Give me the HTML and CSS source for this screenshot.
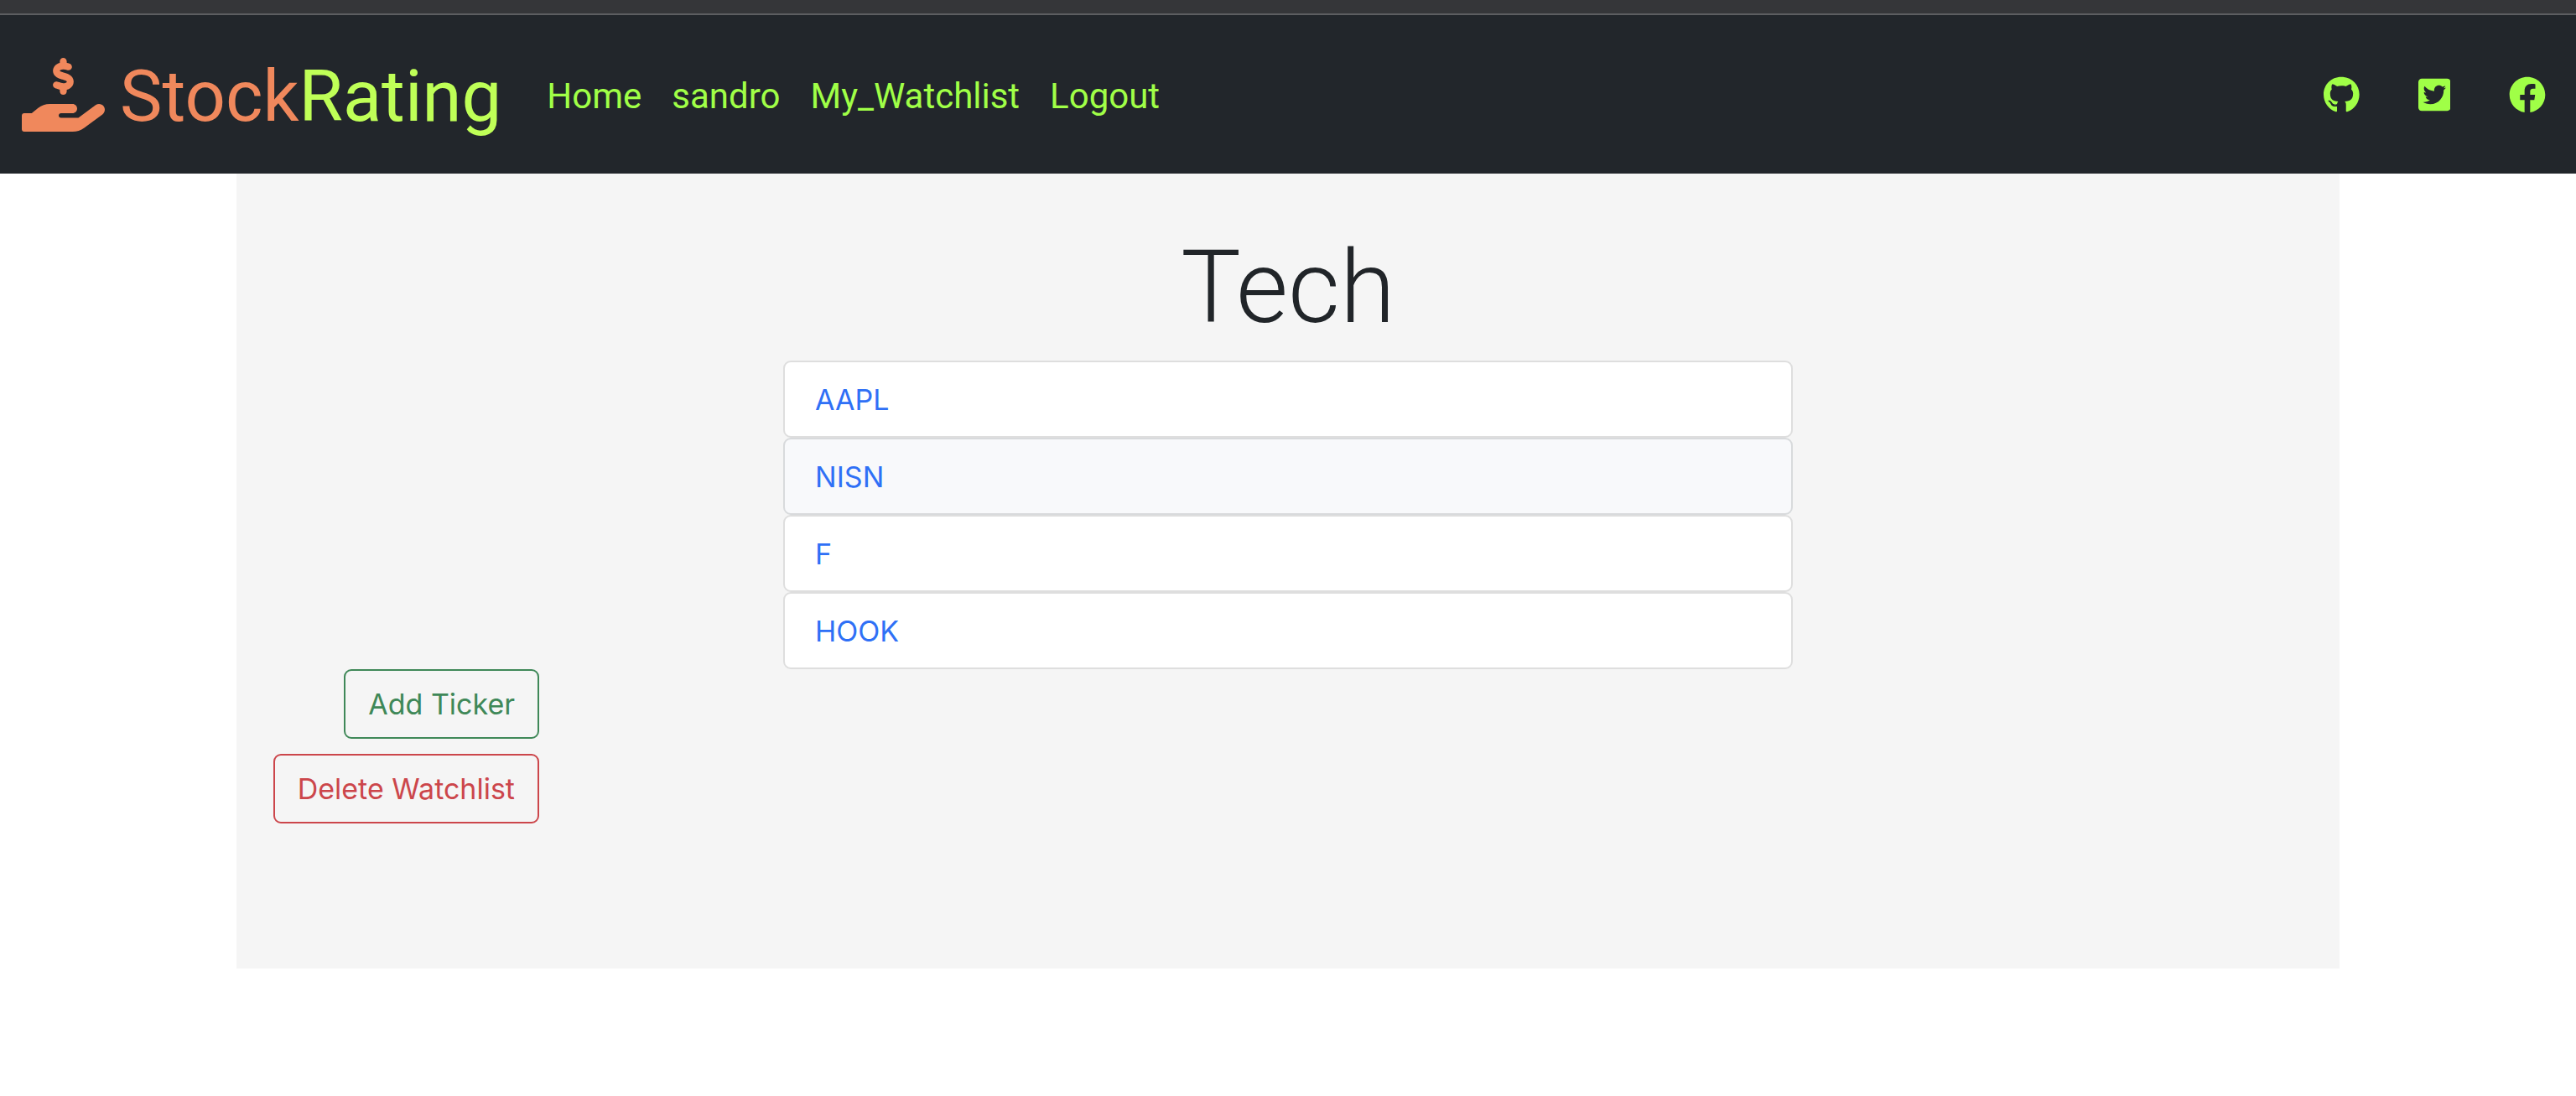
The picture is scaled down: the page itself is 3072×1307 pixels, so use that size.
FILE: index.html
```html
<!DOCTYPE html>
<html lang="en">
<head>
<meta charset="utf-8">
<meta name="viewport" content="width=device-width, initial-scale=1">
<title>StockRating</title>
<link rel="stylesheet" href="styles.css">
</head>
<body>
<header class="navbar">
  <a class="brand" href="#">
    <svg class="brand-icon" viewBox="0 0 576 512" aria-hidden="true"><path d="M312 24V34.5c6.4 1.2 12.6 2.700 18.2 4.200c12.800 3.400 20.400 16.600 17 29.400s-16.600 20.400-29.400 17c-10.900-2.900-21.100-4.900-30.200-5c-7.300-.1-14.700 1.700-19.400 4.400c-2.100 1.300-3.100 2.400-3.500 3c-.3 .5-.7 1.200-.7 2.800c0 .3 0 .5 0 .6c.2 .2 .9 1.200 3.300 2.600c5.800 3.500 14.400 6.200 27.400 10.100l.9 .3c11.100 3.300 25.900 7.800 37.900 15.300c13.700 8.600 26.100 22.900 26.400 44.900c.3 22.500-11.400 38.900-26.700 48.500c-6.700 4.100-13.900 7-21.300 8.800V232c0 13.300-10.700 24-24 24s-24-10.700-24-24V220.600c-9.500-2.300-18.200-5.300-25.600-7.800c-2.100-.7-4.100-1.400-6-2c-12.600-4.200-19.400-17.800-15.200-30.400s17.800-19.400 30.400-15.200c2.600 .9 5 1.700 7.300 2.500c13.600 4.600 23.400 7.900 33.900 8.300c8 .3 15.100-1.600 19.200-4.100c1.900-1.200 2.800-2.200 3.200-2.900c.4-.6 .9-1.800 .8-4.100l0-.2c0-1 0-2.100-4-4.600c-5.700-3.600-14.300-6.400-27.100-10.300l-1.900-.6c-10.800-3.200-25-7.500-36.400-14.400c-13.500-8.100-26.500-22-26.600-44.100c-.1-22.900 12.900-38.600 27.700-47.400c6.400-3.800 13.300-6.400 20.200-8.200V24c0-13.300 10.700-24 24-24s24 10.700 24 24zM568.200 336.300c13.100 17.800 9.300 42.800-8.500 55.900L433.100 485.500c-23.400 17.200-51.600 26.500-80.700 26.500H16c-8.800 0-16-7.200-16-16V400c0-8.800 7.200-16 16-16H68.800l44.900-36c22.700-18.200 50.900-28 80-28H352c17.700 0 32 14.300 32 32s-14.300 32-32 32H272c-8.800 0-16 7.200-16 16s7.200 16 16 16H392.600l119.700-88.200c17.800-13.100 42.800-9.300 55.900 8.500z"/></svg>
    <span class="brand-name">Stock<span class="brand-accent">Rating</span></span>
  </a>
  <nav class="links">
    <a href="#">Home</a>
    <a href="#">sandro</a>
    <a href="#">My_Watchlist</a>
    <a href="#">Logout</a>
  </nav>
  <div class="social">
    <a href="#" aria-label="GitHub"><svg viewBox="0 0 496 512"><path d="M165.900 397.400c0 2-2.300 3.600-5.200 3.600-3.300.3-5.600-1.300-5.600-3.600 0-2 2.300-3.600 5.200-3.600 3-.3 5.600 1.300 5.600 3.600zM244.800 8C106.100 8 0 113.300 0 252c0 110.900 69.800 205.800 169.500 239.200 12.800 2.300 17.300-5.600 17.300-12.100 0-6.200-.3-40.400-.3-61.400 0 0-70 15-84.700-29.800 0 0-11.400-29.100-27.800-36.600 0 0-22.900-15.700 1.600-15.400 0 0 24.900 2 38.600 25.800 21.900 38.600 58.600 27.500 72.900 20.900 2.300-16 8.800-27.100 16-33.700-55.900-6.200-112.300-14.300-112.300-110.500 0-27.500 7.600-41.300 23.600-58.900-2.600-6.500-11.100-33.300 2.600-67.900 20.900-6.500 69 27 69 27 20-5.600 41.500-8.500 62.800-8.500s42.800 2.900 62.800 8.500c0 0 48.100-33.600 69-27 13.700 34.700 5.200 61.400 2.600 67.900 16 17.700 25.800 31.500 25.800 58.900 0 96.500-58.900 104.200-114.800 110.500 9.200 7.900 17 22.900 17 46.400 0 33.700-.3 75.400-.3 83.600 0 6.500 4.600 14.400 17.300 12.100C428.200 457.800 496 362.900 496 252 496 113.300 383.500 8 244.800 8z"/></svg></a>
    <a href="#" aria-label="Twitter"><svg viewBox="0 0 448 512"><path d="M400 32H48C21.500 32 0 53.500 0 80v352c0 26.500 21.500 48 48 48h352c26.500 0 48-21.500 48-48V80c0-26.500-21.500-48-48-48zm-48.900 158.800c.2 2.800.2 5.700.2 8.500 0 86.700-66 186.600-186.600 186.600-37.200 0-71.700-10.800-100.700-29.400 5.300.6 10.400.8 15.800.8 30.700 0 58.900-10.400 81.400-28-28.800-.6-53-19.500-61.300-45.500 10.100 1.500 19.200 1.500 29.600-1.200-30-6.100-52.500-32.500-52.500-64.400v-.8c8.700 4.900 18.900 7.900 29.600 8.300a65.447 65.447 0 0 1-29.200-54.600c0-12.200 3.200-23.400 8.900-33.100 32.300 39.800 80.800 65.800 135.200 68.600-9.300-44.500 24-80.600 64-80.600 18.900 0 35.900 7.900 47.900 20.700 14.800-2.800 29-8.300 41.600-15.800-4.900 15.200-15.200 28-28.800 36.100 13.200-1.400 26-5.100 37.800-10.200-8.900 13.100-20.100 24.700-32.900 34z"/></svg></a>
    <a href="#" aria-label="Facebook"><svg viewBox="0 0 512 512"><path d="M504 256C504 119 393 8 256 8S8 119 8 256c0 123.780 90.690 226.380 209.250 245V327.690h-63V256h63v-54.640c0-62.150 37-96.480 93.670-96.480 27.140 0 55.520 4.840 55.520 4.840v61h-31.280c-30.800 0-40.410 19.120-40.410 38.730V256h68.780l-11 71.690h-57.780V501C413.310 482.380 504 379.780 504 256z"/></svg></a>
  </div>
</header>
<main class="page">
  <h1 class="title">Tech</h1>
  <div class="list">
    <a class="item" href="#">AAPL</a>
    <a class="item active" href="#">NISN</a>
    <a class="item" href="#">F</a>
    <a class="item" href="#">HOOK</a>
  </div>
  <div class="actions">
    <button class="btn add" type="button">Add Ticker</button>
    <button class="btn delete" type="button">Delete Watchlist</button>
  </div>
</main>
</body>
</html>
```
FILE: styles.css
```css
* { box-sizing: border-box; }

body {
  margin: 0;
  background: #fff;
  color: #212529;
  font: 400 34px/54px Inter, "Liberation Sans", sans-serif;
}

a { color: inherit; text-decoration: none; }

svg { display: block; fill: currentColor; }

.navbar {
  display: flex;
  align-items: center;
  margin-top: 16px;
  padding: 26px;
  color: #a0ff47;
  background: #22262b;
  border-top: 2px solid #5d5e61;
  box-shadow: 0 -16px #353639;
}

.brand {
  display: flex;
  align-items: center;
  gap: 18px;
  color: #f0885c;
}

.brand-icon { width: 99px; height: 88px; }

.brand-name {
  padding-top: 6px;
  font-family: Roboto, sans-serif;
  font-size: 85px;
  line-height: 131px;
}

.brand-accent { color: #bfff57; }

.links {
  display: flex;
  gap: 36px;
  margin-left: 54px;
  padding-top: 4px;
  font-family: Roboto, sans-serif;
  font-size: 42px;
}

.social {
  display: flex;
  gap: 70px;
  margin-left: auto;
  padding-right: 10px;
}

.social svg { height: 44px; }

.page {
  width: 82%;
  max-width: 2508px;
  min-height: 948px;
  margin: 0 auto;
  padding-top: 64px;
  background: #f5f5f5;
}

.title {
  margin: 0 0 15px;
  font-family: Roboto, sans-serif;
  font-size: 120px;
  font-weight: 300;
  line-height: 144px;
  text-align: center;
}

.list {
  display: flex;
  flex-direction: column;
  width: 48%;
  margin: 0 auto;
}

.item {
  padding: 18px 36px 16px;
  color: #2f70f6;
  background: #fff;
  border: 2px solid #dedede;
  border-radius: 9px;
}

.item.active { background: #f8f9fb; border-color: #d8dadc; }

.actions {
  display: flex;
  flex-direction: column;
  align-items: flex-end;
  gap: 18px;
  width: 361px;
}

.btn {
  padding: 13px 27px 12px;
  font: inherit;
  background: transparent;
  border: 2px solid currentColor;
  border-radius: 9px;
}

.add { color: #3f8858; }

.delete { color: #cc464b; }
```
